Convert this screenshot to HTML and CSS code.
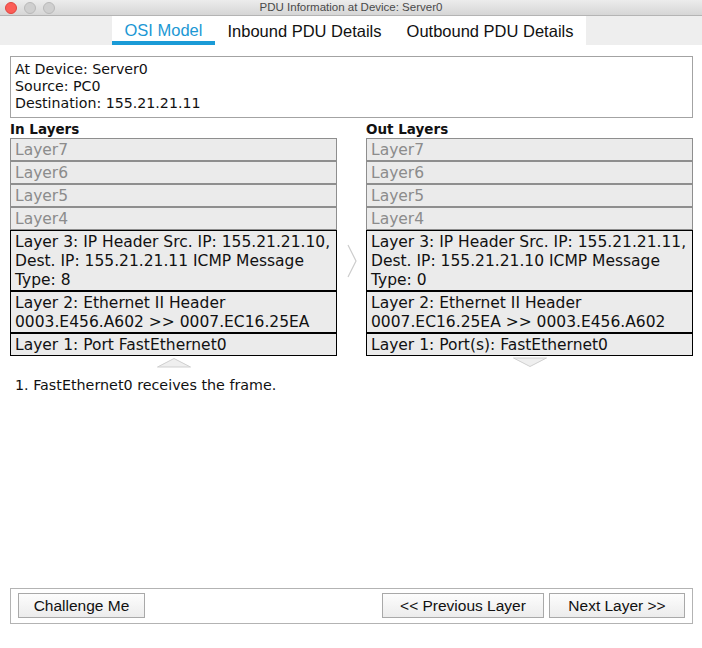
FILE: index.html
```html
<!DOCTYPE html>
<html>
<head>
<meta charset="utf-8">
<title>PDU Information at Device: Server0</title>
<link rel="stylesheet" href="styles.css">
</head>
<body>
<div class="window">
  <div class="titlebar">
    <div class="lights">
      <span class="light red"></span>
      <span class="light"></span>
      <span class="light"></span>
    </div>
    <div class="title">PDU Information at Device: Server0</div>
    <div></div>
  </div>
  <div class="tabbar">
    <div class="tabs">
      <div class="tab active">OSI Model</div>
      <div class="tab">Inbound PDU Details</div>
      <div class="tab">Outbound PDU Details</div>
    </div>
  </div>
  <div class="content">
    <div class="info">
      <div>At Device: Server0</div>
      <div>Source: PC0</div>
      <div>Destination: 155.21.21.11</div>
    </div>
    <div class="layers">
      <div class="col">
        <div class="col-title">In Layers</div>
        <div class="stack">
          <div class="layer">Layer7</div>
          <div class="layer">Layer6</div>
          <div class="layer">Layer5</div>
          <div class="layer">Layer4</div>
          <div class="layer on">Layer 3: IP Header Src. IP: 155.21.21.10, Dest. IP: 155.21.21.11 ICMP Message Type: 8</div>
          <div class="layer on">Layer 2: Ethernet II Header 0003.E456.A602 &gt;&gt; 0007.EC16.25EA</div>
          <div class="layer on">Layer 1: Port FastEthernet0</div>
        </div>
        <div class="nav">
          <svg width="34" height="11" viewBox="0 0 34 11"><polygon points="0.5,10 17,1.5 33.5,10" fill="#efefef" stroke="#cfcfcf" stroke-width="1"/></svg>
        </div>
      </div>
      <div class="mid">
        <svg width="29" height="34" viewBox="0 0 29 34"><polyline points="11,1 19,17 11,33" fill="none" stroke="#cdcdcd" stroke-width="1.2"/></svg>
      </div>
      <div class="col">
        <div class="col-title">Out Layers</div>
        <div class="stack">
          <div class="layer">Layer7</div>
          <div class="layer">Layer6</div>
          <div class="layer">Layer5</div>
          <div class="layer">Layer4</div>
          <div class="layer on">Layer 3: IP Header Src. IP: 155.21.21.11, Dest. IP: 155.21.21.10 ICMP Message Type: 0</div>
          <div class="layer on">Layer 2: Ethernet II Header 0007.EC16.25EA &gt;&gt; 0003.E456.A602</div>
          <div class="layer on">Layer 1: Port(s): FastEthernet0</div>
        </div>
        <div class="nav">
          <svg width="34" height="11" viewBox="0 0 34 11"><polygon points="0.5,1 33.5,1 17,9.5" fill="#efefef" stroke="#cfcfcf" stroke-width="1"/></svg>
        </div>
      </div>
    </div>
    <p class="msg">1. FastEthernet0 receives the frame.</p>
  </div>
  <div class="footer">
    <button class="btn btn-challenge">Challenge Me</button>
    <div class="footer-right">
      <button class="btn btn-prev">&lt;&lt; Previous Layer</button>
      <button class="btn btn-next">Next Layer &gt;&gt;</button>
    </div>
  </div>
</div>
</body>
</html>
```
FILE: styles.css
```css
html, body {
  margin: 0;
  padding: 0;
  background: #ffffff;
}
body {
  width: 702px;
  height: 648px;
  overflow: hidden;
  font-family: "DejaVu Sans", Verdana, sans-serif;
  color: #111111;
}
.window {
  display: flex;
  flex-direction: column;
  height: 648px;
}
.titlebar {
  height: 15px;
  border-bottom: 1px solid #b4b4b4;
  background: linear-gradient(#ececec, #d6d6d6);
  display: grid;
  grid-template-columns: 1fr auto 1fr;
  align-items: center;
}
.lights {
  display: flex;
  gap: 7px;
  padding-left: 5px;
}
.light {
  width: 10px;
  height: 10px;
  border-radius: 50%;
  background: #cfcfcf;
  border: 0.5px solid #b9b9b9;
}
.light.red {
  background: #fc5d57;
  border-color: #df463f;
}
.title {
  font-family: "Liberation Sans", Arial, sans-serif;
  font-size: 11.5px;
  color: #4a4a4a;
  line-height: 15px;
}
.tabbar {
  height: 29px;
  background: #eeeeee;
  display: flex;
}
.tabs {
  margin-left: 112px;
  display: flex;
  flex-shrink: 0;
  background: #ffffff;
}
.tab {
  padding: 1px 12.5px 0;
  font-family: "Liberation Sans", Arial, sans-serif;
  font-size: 16.5px;
  line-height: 29px;
  white-space: nowrap;
  flex-shrink: 0;
  color: #111111;
  box-sizing: border-box;
  height: 29px;
}
.tab.active {
  color: #1c98d4;
  border-bottom: 4px solid #1a9bd7;
  line-height: 27px;
}
.content {
  flex: 1;
  display: flex;
  flex-direction: column;
}
.info {
  margin: 11px 9px 0 10px;
  border: 1px solid #a3a3a3;
  padding: 4px 4px 5px;
  font-size: 14.2px;
  line-height: 17px;
}
.layers {
  display: grid;
  grid-template-columns: 327px 29px 327px;
  margin-left: 10px;
}
.col-title {
  font-weight: bold;
  font-size: 13.5px;
  line-height: 20px;
  padding-top: 1px;
  height: 19px;
}
.stack {
  display: flex;
  flex-direction: column;
}
.layer {
  border: 1px solid #8e8e8e;
  background: #ebebeb;
  padding: 2px 4px 0;
  font-size: 15.5px;
  line-height: 19px;
  color: #8c8c8c;
}
.layer.on {
  border-color: #000000;
  color: #111111;
}
.nav {
  display: flex;
  justify-content: center;
  padding-top: 1px;
}
.mid {
  padding-top: 126px;
}
.mid svg {
  display: block;
}
.msg {
  margin: 8px 0 0 15px;
  font-size: 14.3px;
  line-height: 18px;
}
.footer {
  margin: 0 9px 24px 10px;
  border: 1px solid #b3b3b3;
  padding: 4px 7px 5px;
  display: flex;
  justify-content: space-between;
}
.footer-right {
  display: flex;
  gap: 5px;
}
.btn {
  height: 25px;
  border: 1px solid #a9a9a9;
  background: linear-gradient(#fdfdfd, #ececec);
  font-family: "Liberation Sans", Arial, sans-serif;
  font-size: 15.5px;
  color: #111111;
  padding: 0;
  text-align: center;
  border-radius: 0;
}
.btn-challenge { width: 127px; }
.btn-prev { width: 162px; }
.btn-next { width: 136px; }
```
